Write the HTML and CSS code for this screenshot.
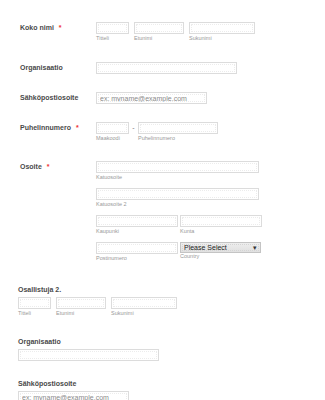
FILE: index.html
```html
<!DOCTYPE html>
<html lang="fi">
<head>
<meta charset="UTF-8">
<title>Ilmoittautuminen</title>
<link rel="stylesheet" href="styles.css">
</head>
<body>

<div class="form">
  <div class="row">
    <label class="label">Koko nimi <span class="req">*</span></label>
    <div class="fields">
      <div class="field"><input type="text" class="w-xs"><span class="sub">Titteli</span></div>
      <div class="field"><input type="text" class="w-sm"><span class="sub">Etunimi</span></div>
      <div class="field"><input type="text" class="w-md"><span class="sub">Sukunimi</span></div>
    </div>
  </div>

  <div class="row">
    <label class="label">Organisaatio</label>
    <div class="fields"><input type="text" class="w-lg"></div>
  </div>

  <div class="row">
    <label class="label">Sähköpostiosoite</label>
    <div class="fields"><input type="text" class="w-email" placeholder="ex: myname@example.com"></div>
  </div>

  <div class="row">
    <label class="label">Puhelinnumero <span class="req">*</span></label>
    <div class="fields phone">
      <div class="field"><input type="text" class="w-xs"><span class="sub">Maakoodi</span></div>
      <span class="dash">-</span>
      <div class="field"><input type="text" class="w-phone"><span class="sub">Puhelinnumero</span></div>
    </div>
  </div>

  <div class="row row-address">
    <label class="label">Osoite <span class="req">*</span></label>
    <div class="address">
      <div class="field addr-line"><input type="text" class="w-full"><span class="sub">Katuosoite</span></div>
      <div class="field addr-line"><input type="text" class="w-full"><span class="sub">Katuosoite 2</span></div>
      <div class="addr-pair addr-line">
        <div class="field"><input type="text" class="w-half"><span class="sub">Kaupunki</span></div>
        <div class="field"><input type="text" class="w-half"><span class="sub">Kunta</span></div>
      </div>
      <div class="addr-pair">
        <div class="field"><input type="text" class="w-half"><span class="sub">Postinumero</span></div>
        <div class="field">
          <span class="select-wrap"><select class="w-select"><option>Please Select</option></select></span>
          <span class="sub sub-country">Country</span>
        </div>
      </div>
    </div>
  </div>

  <div class="block">
    <label class="label-top">Osallistuja 2.</label>
    <div class="fields">
      <div class="field"><input type="text" class="w-xs"><span class="sub">Titteli</span></div>
      <div class="field"><input type="text" class="w-sm"><span class="sub">Etunimi</span></div>
      <div class="field"><input type="text" class="w-md"><span class="sub">Sukunimi</span></div>
    </div>
  </div>

  <div class="block">
    <label class="label-top">Organisaatio</label>
    <input type="text" class="w-lg">
  </div>

  <div class="block">
    <label class="label-top">Sähköpostiosoite</label>
    <input type="text" class="w-email" placeholder="ex: myname@example.com">
  </div>
</div>

</body>
</html>
```

FILE: styles.css
```css
body { margin: 0; background: #fff; font-family: "Liberation Sans", Arial, sans-serif; color: #555; }
.form { padding: 22px 0 0 20px; }

.row { display: flex; margin-bottom: 18px; }
.row-address { margin-top: -1px; margin-bottom: 0; }
.label { width: 76px; flex: none; font-size: 7px; font-weight: bold; line-height: 12px; color: #4a4a4a; }
.req { color: #e33; margin-left: 3px; }

.fields { display: flex; gap: 5px; align-items: flex-start; }
.field { display: flex; flex-direction: column; }
.sub { font-size: 5.5px; line-height: 7px; margin-top: 1px; padding-bottom: 2px; color: #999; }

input, select {
  box-sizing: border-box; height: 12px; margin: 0; padding: 0 3px;
  border: 1px solid #dcdcdc; background: #fff;
  outline: 1px dotted #ececec; outline-offset: -3px;
  font-family: "Liberation Sans", Arial, sans-serif; font-size: 7px; color: #555;
}
input::placeholder { color: #8a8a8a; }

.w-xs { width: 33px; }
.w-sm { width: 50px; }
.w-md { width: 66px; }
.w-lg { width: 141px; }
.w-email { width: 111px; }
.w-phone { width: 80px; }
.w-full { width: 163px; }
.w-half { width: 82px; }
.w-select { width: 81px; height: 11px; }

.phone { gap: 0; }
.dash { width: 9px; text-align: center; font-size: 7px; line-height: 12px; color: #777; }

.address { display: flex; flex-direction: column; }
.addr-line { margin-bottom: 5px; }
.addr-pair { display: flex; gap: 2px; }

.select-wrap { position: relative; display: inline-block; }
.select-wrap::after {
  content: "\25BE"; position: absolute; right: 4px; top: 0;
  font-size: 7px; line-height: 11px; color: #333; pointer-events: none;
}
select {
  appearance: none; -webkit-appearance: none; display: block;
  background: linear-gradient(#eee, #e0e0e0); border-color: #c4c4c4;
  outline-color: #d4d4d4; color: #222; padding-left: 3px;
}
.sub-country { margin-top: 0; }

.block { margin-top: 21px; margin-left: -2px; }
.block + .block { margin-top: 18px; }
.block > input { display: block; }
.label-top { display: block; font-size: 7px; font-weight: bold; line-height: 9px; margin-bottom: 3px; color: #4a4a4a; }
```
